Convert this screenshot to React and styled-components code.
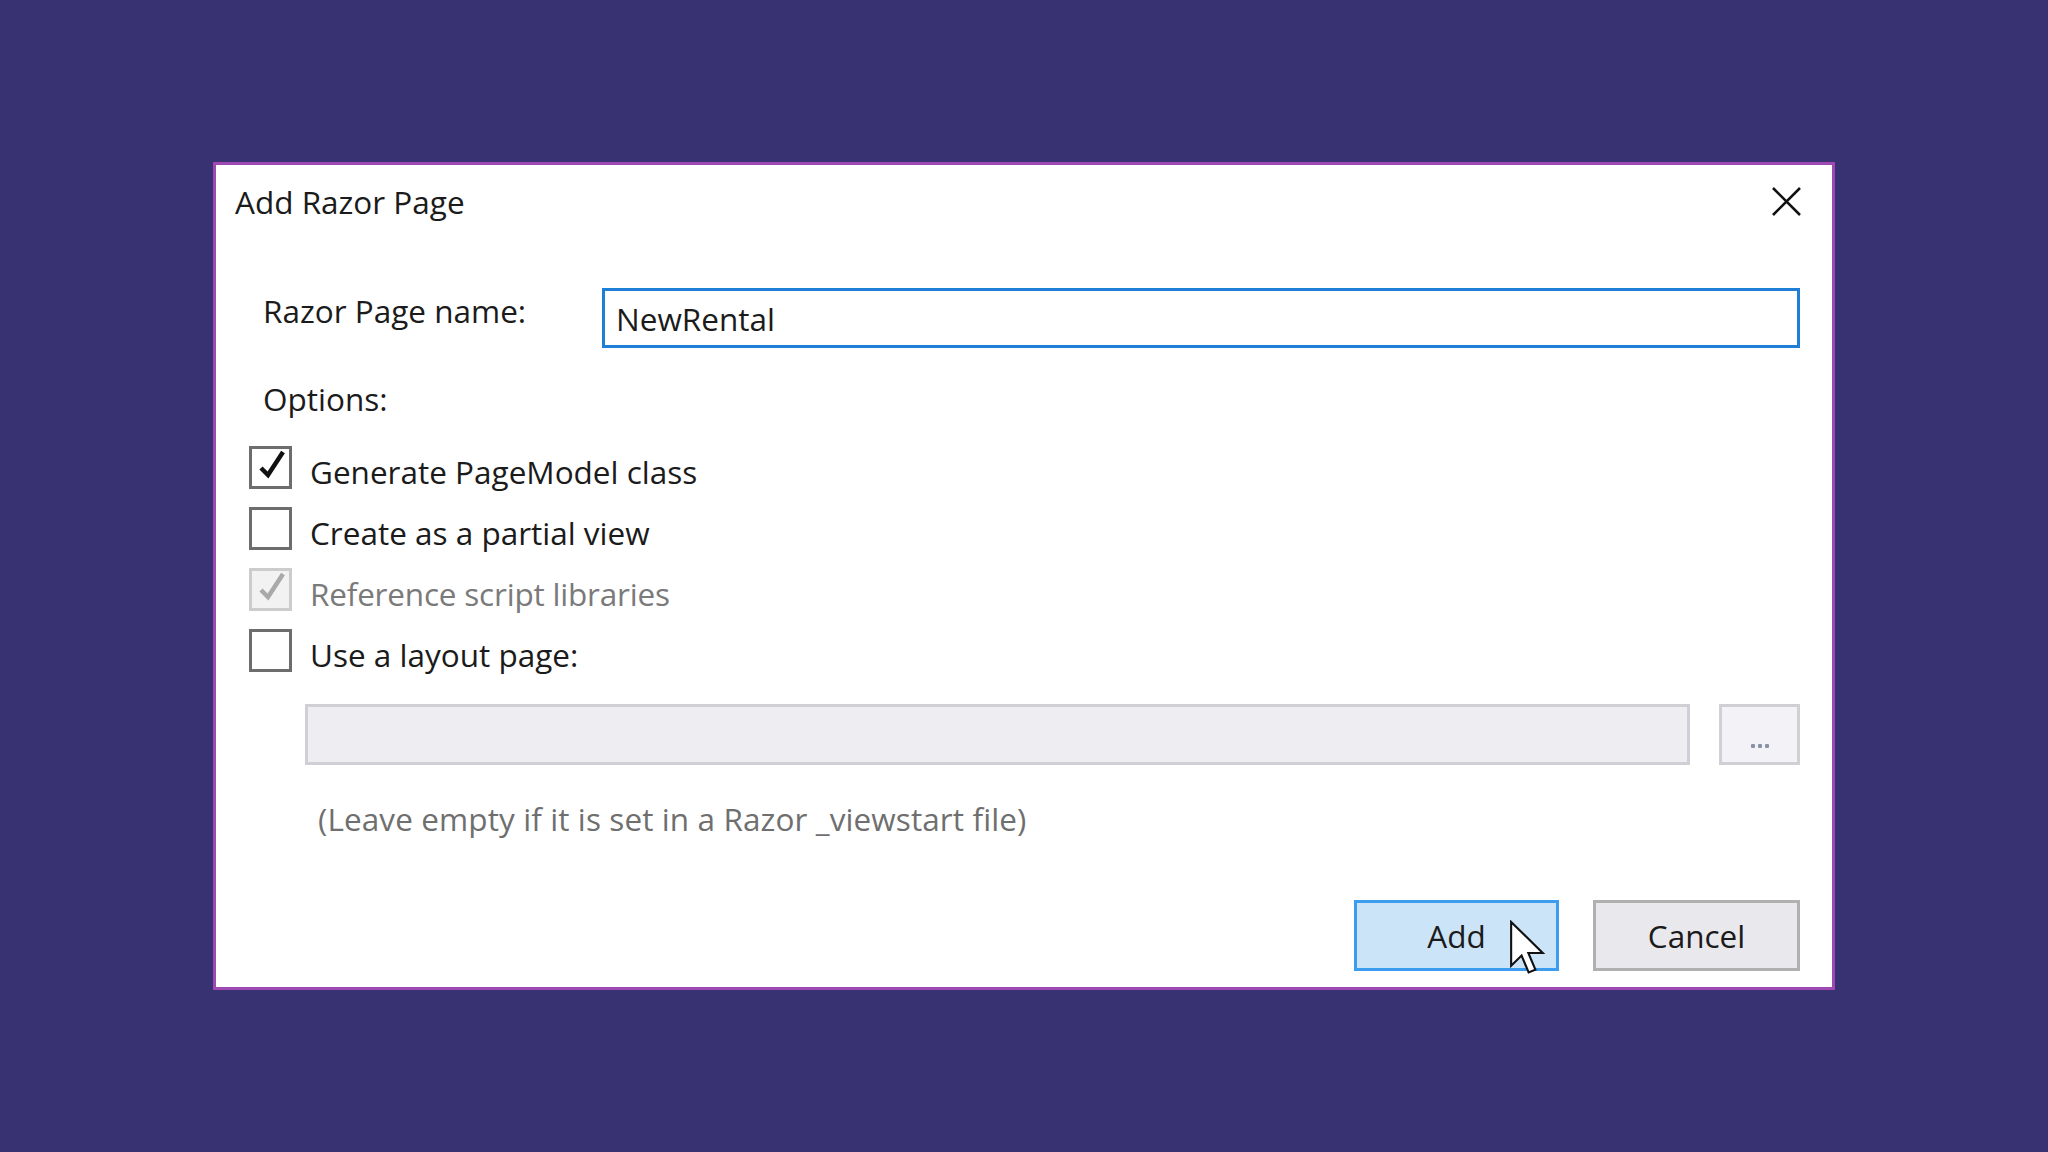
import React from "react";
import styled, { createGlobalStyle } from "styled-components";

const Global = createGlobalStyle`
  html, body { margin: 0; padding: 0; }
  body { background: #393272; font-family: "Open Sans", "Noto Sans", sans-serif; }
  * { box-sizing: border-box; }
`;

const Page = styled.div`
  width: 100vw;
  height: 100vh;
  display: flex;
  align-items: center;
  justify-content: center;
  background: #393272;
`;

const Dialog = styled.div`
  width: 1622px;
  height: 828px;
  background: #ffffff;
  border: 3px solid #9d48b3;
  display: flex;
  flex-direction: column;
  color: #1b1b1b;
  font-size: 31.5px;
`;

const TitleBar = styled.div`
  height: 76px;
  display: flex;
  align-items: center;
  justify-content: space-between;
  padding: 0 31px 0 19px;
`;

const Title = styled.div`
  font-size: 31.5px;
  line-height: 40px;
  margin-top: -2px;
`;

const CloseButton = styled.div`
  width: 29px;
  height: 29px;
  display: flex;
  align-items: center;
  justify-content: center;
  margin-top: -4px;
`;

const Body = styled.div`
  flex: 1;
  display: flex;
  flex-direction: column;
  padding: 0 32px 16px 33px;
`;

const NameRow = styled.div`
  margin-top: 47px;
  display: grid;
  grid-template-columns: 353px 1fr;
  align-items: center;
`;

const Label = styled.div`
  padding-left: ${(p) => p.$indent || 0}px;
  line-height: 44px;
  color: ${(p) => (p.$muted ? "#6f6f6f" : "#1b1b1b")};
`;

const NameLabel = styled(Label)`
  margin-top: -14px;
`;

const TextInput = styled.div`
  height: 60px;
  border: 3px solid #1f7fd6;
  background: #fff;
  display: flex;
  align-items: center;
  padding-left: 11px;
`;

const OptionsLabel = styled(Label)`
  margin-top: 29px;
`;

const CheckList = styled.div`
  margin-top: 18px;
  display: flex;
  flex-direction: column;
`;

const CheckRow = styled.div`
  height: 61px;
  display: flex;
  align-items: center;
  gap: 18px;
  color: ${(p) => (p.$disabled ? "#7a7a7a" : "#1b1b1b")};
  letter-spacing: ${(p) => (p.$disabled ? "-0.2px" : "0")};
`;

const RowText = styled.span`
  padding-top: 4px;
`;

const Box = styled.div`
  width: 43px;
  height: 43px;
  flex: none;
  border: 3px solid ${(p) => (p.$disabled ? "#cccccc" : "#6d6d6d")};
  background: ${(p) => (p.$disabled ? "#f2f2f2" : "#ffffff")};
  display: flex;
  align-items: center;
  justify-content: center;
  margin-top: -4px;
`;

const LayoutRow = styled.div`
  margin-top: 21px;
  padding-left: 56px;
  display: flex;
  gap: 29px;
`;

const LayoutInput = styled.div`
  flex: 1;
  height: 61px;
  background: #eeedf2;
  border: 3px solid #d0cfd6;
`;

const BrowseButton = styled.div`
  width: 81px;
  height: 61px;
  background: #f3f2f6;
  border: 3px solid #cfcfd4;
  display: flex;
  align-items: flex-end;
  justify-content: center;
  padding-bottom: 14px;
  gap: 3px;
`;

const Dot = styled.span`
  width: 4px;
  height: 4px;
  background: #8a93a6;
  border-radius: 1px;
`;

const Hint = styled(Label)`
  margin-top: 32px;
  padding-left: 69px;
  letter-spacing: 0.1px;
`;

const ButtonRow = styled.div`
  margin-top: auto;
  display: flex;
  justify-content: flex-end;
  gap: 34px;
`;

const Button = styled.div`
  position: relative;
  width: ${(p) => p.$w}px;
  height: 71px;
  display: flex;
  align-items: center;
  justify-content: center;
  background: ${(p) => (p.$primary ? "#cce4f7" : "#e9e8ec")};
  border: 3px solid ${(p) => (p.$primary ? "#3c9cf0" : "#b0b0b0")};
  color: #1b1b1b;
`;

const Cursor = styled.svg`
  position: absolute;
  left: 152px;
  top: 17px;
`;

const Check = ({ color }) => (
  <svg width="37" height="37" viewBox="0 0 37 37">
    <path d="M9 19 L16 26 L31 3" fill="none" stroke={color} strokeWidth="4.5" strokeLinejoin="miter" strokeLinecap="butt" />
  </svg>
);

const options = [
  { label: "Generate PageModel class", checked: true },
  { label: "Create as a partial view", checked: false },
  { label: "Reference script libraries", checked: true, disabled: true },
  { label: "Use a layout page:", checked: false },
];

export default function App() {
  return (
    <Page>
      <Global />
      <Dialog>
        <TitleBar>
          <Title>Add Razor Page</Title>
          <CloseButton>
            <svg width="29" height="29" viewBox="0 0 29 29">
              <path d="M1 1 L28 28 M28 1 L1 28" stroke="#111" strokeWidth="2.6" />
            </svg>
          </CloseButton>
        </TitleBar>
        <Body>
          <NameRow>
            <NameLabel $indent={14}>Razor Page name:</NameLabel>
            <TextInput>NewRental</TextInput>
          </NameRow>
          <OptionsLabel $indent={14}>Options:</OptionsLabel>
          <CheckList>
            {options.map((o) => (
              <CheckRow key={o.label} $disabled={o.disabled}>
                <Box $disabled={o.disabled}>
                  {o.checked && <Check color={o.disabled ? "#a9a9a9" : "#111"} />}
                </Box>
                <RowText>{o.label}</RowText>
              </CheckRow>
            ))}
          </CheckList>
          <LayoutRow>
            <LayoutInput />
            <BrowseButton>
              <Dot />
              <Dot />
              <Dot />
            </BrowseButton>
          </LayoutRow>
          <Hint $muted>(Leave empty if it is set in a Razor _viewstart file)</Hint>
          <ButtonRow>
            <Button $primary $w={205}>
              Add
              <Cursor width="37" height="55" viewBox="0 0 13 19.5">
                <path
                  d="M0.7 0.7 L0.7 16.2 L4.4 12.6 L6.9 18.6 L9.3 17.6 L6.8 11.7 L11.9 11.7 Z"
                  fill="#fff"
                  stroke="#111"
                  strokeWidth="0.75"
                  strokeLinejoin="miter"
                />
              </Cursor>
            </Button>
            <Button $w={207}>Cancel</Button>
          </ButtonRow>
        </Body>
      </Dialog>
    </Page>
  );
}
